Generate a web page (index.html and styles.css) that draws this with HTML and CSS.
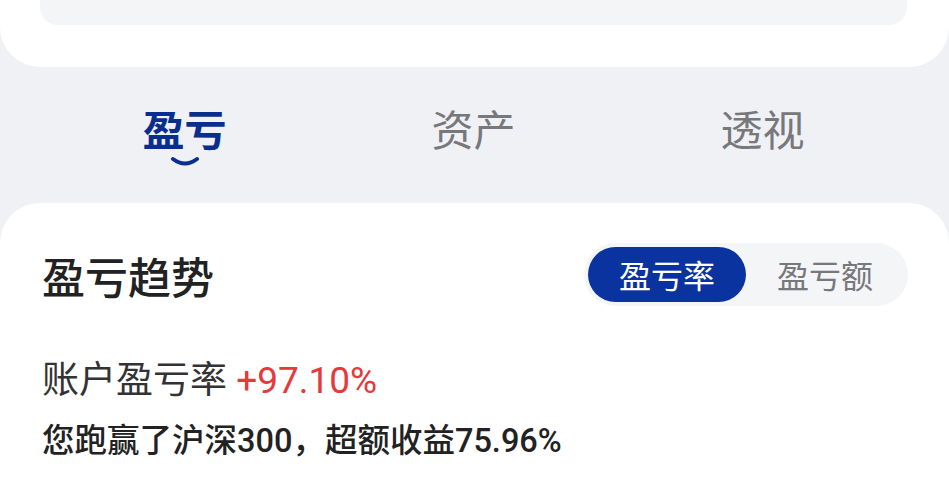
FILE: index.html
```html
<!DOCTYPE html>
<html lang="zh-CN">
<head>
<meta charset="utf-8">
<title>盈亏</title>
<link rel="stylesheet" href="styles.css">
</head>
<body>
  <section class="top-card">
    <div class="summary-box"></div>
  </section>

  <nav class="tabs">
    <div class="tab active">
      <span class="tab-label">盈亏</span>
      <svg class="smile" width="30" height="10" viewBox="0 0 30 10"><path d="M3 3 Q15 12 27 3" fill="none" stroke="#0a2e8e" stroke-width="4" stroke-linecap="round"/></svg>
    </div>
    <div class="tab"><span class="tab-label">资产</span></div>
    <div class="tab"><span class="tab-label">透视</span></div>
  </nav>

  <section class="trend-card">
    <div class="trend-header">
      <h2 class="trend-title">盈亏趋势</h2>
      <div class="segmented">
        <span class="seg seg-active">盈亏率</span>
        <span class="seg">盈亏额</span>
      </div>
    </div>
    <p class="rate-line">账户盈亏率 <span class="rate-value">+97.10%</span></p>
    <p class="beat-line">您跑赢了沪深300，超额收益75.96%</p>
  </section>
</body>
</html>
```
FILE: styles.css
```css
html, body {
  margin: 0;
  padding: 0;
}
body {
  background: #eff1f5;
  font-family: Roboto, "Noto Sans CJK SC", sans-serif;
  color: #222;
  width: 949px;
  height: 500px;
  overflow: hidden;
}
.top-card {
  background: #fff;
  border-radius: 0 0 40px 40px;
  padding: 0 42px 42px 40px;
}
.summary-box {
  height: 25px;
  background: #f4f5f7;
  border-radius: 0 0 18px 18px;
}
.tabs {
  display: grid;
  grid-template-columns: repeat(3, 1fr);
  padding: 36px 42px 0 40px;
  height: 136px;
  box-sizing: border-box;
}
.tab {
  display: flex;
  flex-direction: column;
  align-items: center;
}
.tab-label {
  font-family: "Noto Sans CJK SC", sans-serif;
  font-size: 42px;
  line-height: 50px;
  color: #77787c;
}
.tab.active .tab-label {
  color: #0a2e8e;
  font-weight: 700;
}
.smile {
  display: block;
  margin-top: 3px;
}
.trend-card {
  background: #fff;
  border-radius: 40px 40px 0 0;
  padding: 40px 41px 40px 42px;
  height: 297px;
  box-sizing: border-box;
}
.trend-header {
  display: flex;
  justify-content: space-between;
  align-items: center;
}
.trend-title {
  margin: 0;
  font-family: "Noto Sans CJK SC", sans-serif;
  font-size: 43px;
  line-height: 56px;
  font-weight: 500;
  color: #222;
}
.segmented {
  display: flex;
  background: #f4f5f7;
  border-radius: 32px;
  padding: 4px;
}
.seg {
  font-family: "Noto Sans CJK SC", sans-serif;
  font-size: 32px;
  line-height: 55px;
  padding: 0 31px;
  border-radius: 28px;
  color: #77787c;
}
.seg-active {
  background: #0a33a0;
  color: #fff;
}
.rate-line {
  margin: 51px 0 0;
  font-size: 37px;
  line-height: 48px;
  color: #333;
}
.rate-value {
  color: #e5393a;
}
.beat-line {
  margin: 15px 0 0;
  font-size: 32.5px;
  line-height: 42px;
  font-weight: 500;
  color: #222;
}
```
